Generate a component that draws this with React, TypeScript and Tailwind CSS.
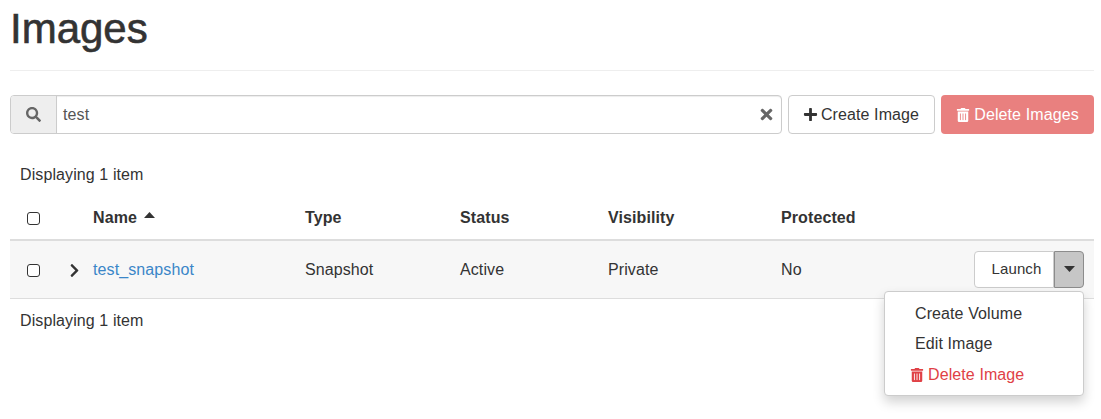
import { FaChevronRight, FaPlus, FaSearch, FaTimes, FaTrashAlt } from "react-icons/fa";

function Caret({ up = false }: { up?: boolean }) {
  return (
    <svg width="11" height="6" viewBox="0 0 10 6" preserveAspectRatio="none" className="fill-current">
      <path d={up ? "M0 6 L5 0 L10 6 Z" : "M0 0 L10 0 L5 6 Z"} />
    </svg>
  );
}

function Checkbox() {
  return <span className="block h-[13px] w-[13px] rounded-[3px] border border-[#333] bg-white" />;
}

function ActionsMenu() {
  return (
    <div className="absolute right-[10px] top-[50px] z-10 h-[105px] w-[200px] rounded-[4px] border border-[#ccc] bg-white pt-[7px] text-[#333] shadow-[0_6px_12px_rgba(0,0,0,0.18)]">
      <div className="h-[30px] pl-[30px] leading-[30px]">Create Volume</div>
      <div className="h-[30px] pl-[30px] leading-[30px]">Edit Image</div>
      <div className="flex h-[31px] items-center gap-[4px] pl-[25px] text-[#e04146]">
        <FaTrashAlt className="text-[14px]" />
        <span>Delete Image</span>
      </div>
    </div>
  );
}

export default function App() {
  return (
    <div className="h-[419px] w-[1101px] overflow-hidden bg-white pl-[10px] pr-[7px] font-['Liberation_Sans',Arial,sans-serif] text-[16px] tracking-[0.1px] text-[#333]">
      <h1 className="h-[71px] border-b border-[#eee] pt-[6px] text-[42px] leading-[46px] font-medium tracking-[0px] [-webkit-text-stroke:0.6px_#333]">Images</h1>

      <div className="mt-[24px] flex h-[39px] gap-[6px]">
        <div className="flex min-w-0 flex-1 rounded-[4px] border border-[#ccc]">
          <span className="flex w-[46px] items-center justify-center rounded-l-[3px] border-r border-[#ccc] bg-[#eee] text-[#666]">
            <FaSearch className="text-[15px]" />
          </span>
          <span className="flex flex-1 items-center rounded-r-[3px] pl-[6px] text-[#555] shadow-[inset_0_1px_1px_rgba(0,0,0,0.075)]">
            <span className="flex-1">test</span>
            <FaTimes className="mr-[6px] text-[17px] text-[#666]" />
          </span>
        </div>
        <button className="flex w-[147px] items-center justify-center gap-[3px] rounded-[4px] border border-[#ccc] bg-white pr-[1px]">
          <FaPlus className="text-[15px]" />
          Create Image
        </button>
        <button className="flex w-[153px] items-center justify-center gap-[4px] rounded-[4px] bg-[#e9807f] text-white">
          <FaTrashAlt className="text-[14px]" />
          Delete Images
        </button>
      </div>

      <div className="mt-[27px] pl-[10px] leading-[28px]">Displaying 1 item</div>

      <div className="relative mt-[7px]">
        <div className="grid h-[45px] grid-cols-[66px_212px_155px_148px_173px_1fr] items-center border-b-2 border-[#ddd] pt-[1px] pl-[17px] font-bold">
          <div>
            <Checkbox />
          </div>
          <div className="flex items-center gap-[7px]">
            Name
            <span className="-mt-[6px]">
              <Caret up />
            </span>
          </div>
          <div>Type</div>
          <div>Status</div>
          <div>Visibility</div>
          <div>Protected</div>
        </div>

        <div className="relative grid h-[58px] grid-cols-[66px_212px_155px_148px_173px_1fr] items-center border-b border-[#ddd] bg-[#f7f7f7] pt-[1px] pl-[17px]">
          <div className="flex items-center gap-[27px]">
            <Checkbox />
            <FaChevronRight className="text-[15px] text-[#333]" />
          </div>
          <div className="text-[#3a86c8]">test_snapshot</div>
          <div>Snapshot</div>
          <div>Active</div>
          <div>Private</div>
          <div className="flex items-center justify-between pr-[10px]">
            <span>No</span>
            <span className="-mt-[2px] flex h-[37px] w-[110px] rounded-[4px]">
              <span className="flex w-[80px] items-center justify-center rounded-l-[4px] border border-[#ccc] bg-white pl-[5px] text-[15px]">Launch</span>
              <span className="flex w-[30px] items-center justify-center rounded-r-[4px] border border-[#8c8c8c] bg-[#c6c6c6] text-[#333]">
                <Caret />
              </span>
            </span>
          </div>
          <ActionsMenu />
        </div>

        <div className="pl-[10px] pt-[8px] leading-[28px]">Displaying 1 item</div>
      </div>
    </div>
  );
}
